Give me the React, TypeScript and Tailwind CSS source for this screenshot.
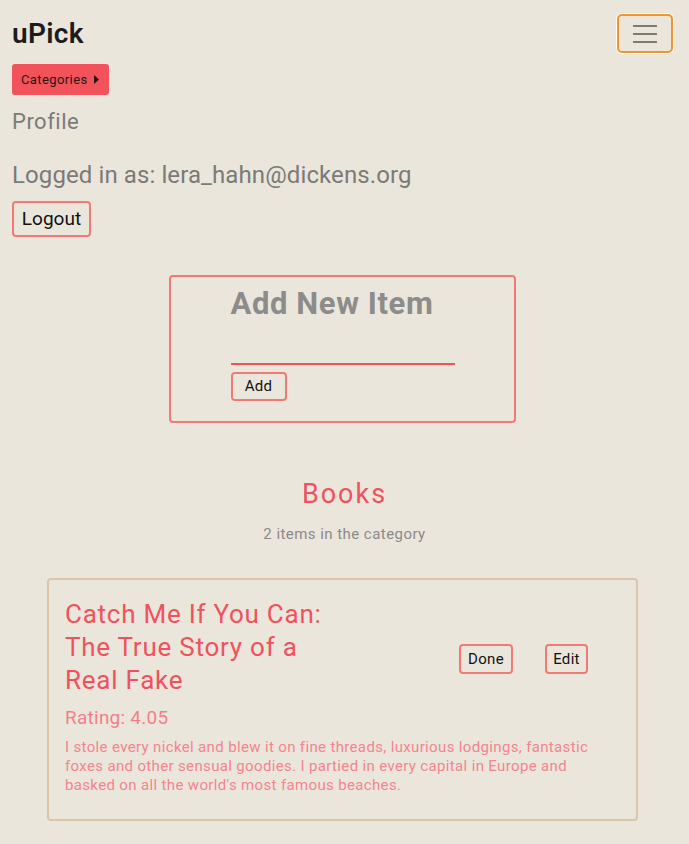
import React from "react";

function Btn({ children, className = "" }: { children: React.ReactNode; className?: string }) {
  return (
    <button
      className={
        "inline-flex items-center justify-center rounded-[4px] border-2 border-[#f07b74] bg-transparent text-[#111111] " +
        className
      }
    >
      {children}
    </button>
  );
}

export default function App() {
  return (
    <div className="min-h-[844px] bg-[#ebe6dc] font-['Roboto',sans-serif] text-[#111]">
      <div className="flex items-start justify-between pl-3 pr-4 pt-[14px]">
        <div className="mt-[3px] text-[28px] leading-[34px] font-semibold tracking-[0.3px] text-[#1c1c1c]">uPick</div>
        <button className="flex h-[39px] w-[56px] flex-col items-center justify-center gap-[6px] rounded-[5px] border-2 border-[#f0962e] ring-1 ring-white/80">
          <span className="block h-[2px] w-[24px] bg-[#7b7b72]" />
          <span className="block h-[2px] w-[24px] bg-[#7b7b72]" />
          <span className="block h-[2px] w-[24px] bg-[#7b7b72]" />
        </button>
      </div>

      <div className="px-3">
        <button className="mt-[11px] flex h-[31px] w-[97px] items-center rounded-[3px] bg-[#f2525a] pl-[9px] text-[13px] tracking-[0.4px] text-[#2a1616]">
          <span>Categories</span>
          <svg className="ml-[6px]" width="5" height="9" viewBox="0 0 5 9">
            <path d="M0 0 L5 4.5 L0 9 Z" fill="#2a1616" />
          </svg>
        </button>

        <div className="mt-[14px] text-[22px] leading-[26px] tracking-[0.5px] text-[#7a7a78]">Profile</div>
        <div className="mt-[26px] text-[24px] leading-[28px] tracking-[0.1px] text-[#7a7a78]">Logged in as: lera_hahn@dickens.org</div>
        <Btn className="mt-[12px] h-[36px] w-[79px] text-[19px]">Logout</Btn>

        <div className="mt-[38px] ml-[157px] h-[148px] w-[347px] rounded-[4px] border-2 border-[#f07b74]">
          <div className="mx-auto w-[224px] pt-[9px]">
            <div className="text-[31px] leading-[36px] font-bold tracking-[0.6px] text-[#8c8c8a]">Add New Item</div>
            <div className="mt-[19px] h-[24px] border-b-2 border-[#ef5552]" />
            <Btn className="mt-[7px] h-[29px] w-[56px] text-[15px] tracking-[0.3px]">Add</Btn>
          </div>
        </div>

        <div className="mt-[56px] text-center text-[27px] leading-[30px] tracking-[2px] text-[#f0525c]">Books</div>
        <div className="mt-[16px] text-center text-[15px] leading-[18px] tracking-[0.45px] text-[#8a8a8a]">2 items in the category</div>

        <div className="mt-[35px] ml-[35px] h-[243px] w-[591px] rounded-[4px] border-2 border-[#dcc5a9] pl-[16px] pt-[18px]">
          <div className="flex items-start">
            <div className="w-[290px] text-[26px] leading-[33px] tracking-[0.75px] text-[#f0525c]">
              <span className="block whitespace-nowrap">Catch Me If You Can:</span>
              <span className="block whitespace-nowrap">The True Story of a</span>
              <span className="block whitespace-nowrap">Real Fake</span>
            </div>
            <div className="ml-[104px] mt-[46px] flex gap-[32px]">
              <Btn className="h-[30px] w-[54px] text-[15px] tracking-[0.3px]">Done</Btn>
              <Btn className="h-[30px] w-[43px] text-[15px] tracking-[0.3px]">Edit</Btn>
            </div>
          </div>
          <div className="mt-[9px] text-[19px] leading-[23px] tracking-[0.25px] text-[#f2808a]">Rating: 4.05</div>
          <div className="mt-[9px] text-[15px] leading-[19px] tracking-[0.35px] text-[#f4848e]">
            <span className="block whitespace-nowrap">I stole every nickel and blew it on fine threads, luxurious lodgings, fantastic</span>
            <span className="block whitespace-nowrap">foxes and other sensual goodies. I partied in every capital in Europe and</span>
            <span className="block whitespace-nowrap">basked on all the world's most famous beaches.</span>
          </div>
        </div>
      </div>
    </div>
  );
}
